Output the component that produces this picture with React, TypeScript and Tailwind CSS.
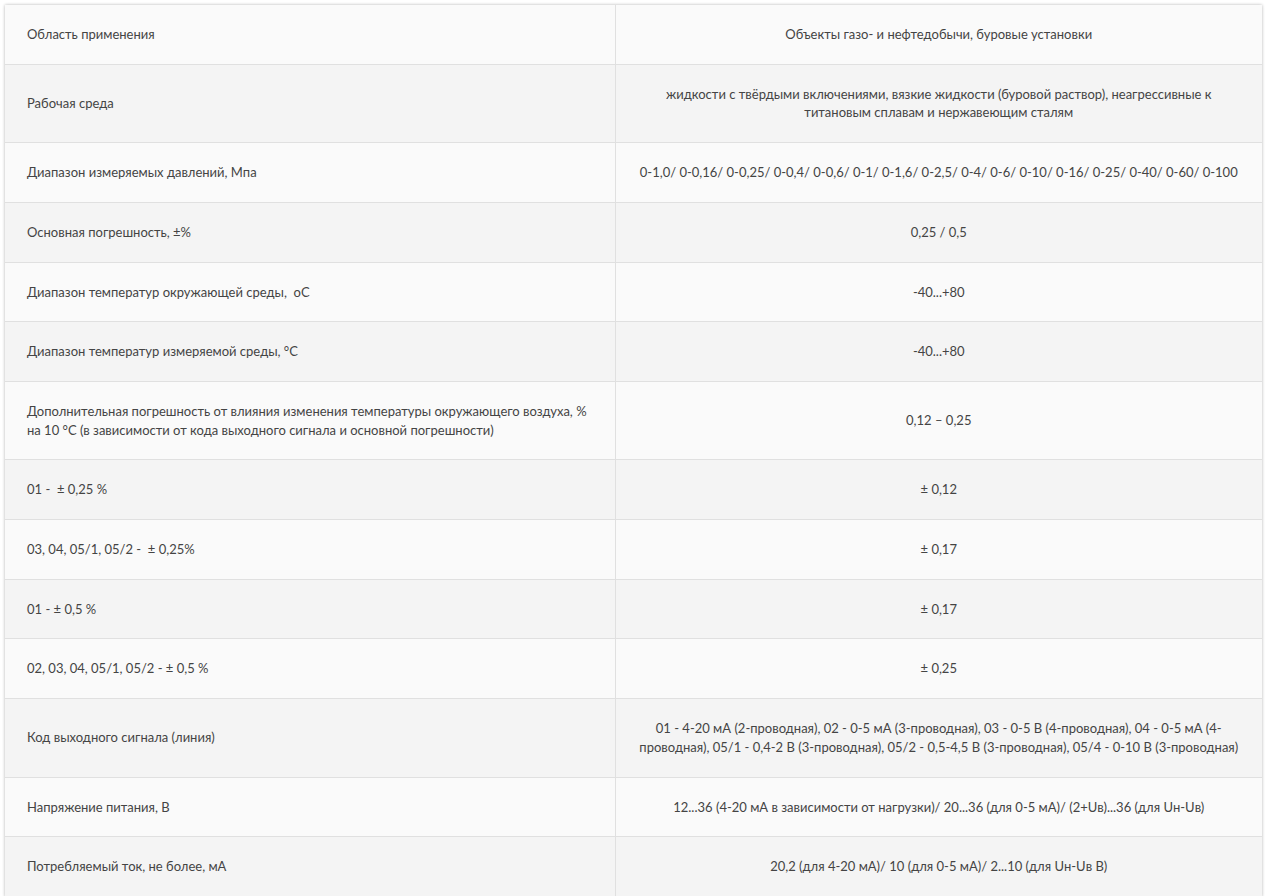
import React from "react";

const rows: [string, string][] = [
  ["Область применения", "Объекты газо- и нефтедобычи, буровые установки"],
  [
    "Рабочая среда",
    "жидкости с твёрдыми включениями, вязкие жидкости (буровой раствор), неагрессивные к титановым сплавам и нержавеющим сталям",
  ],
  [
    "Диапазон измеряемых давлений, Мпа",
    "0-1,0/ 0-0,16/ 0-0,25/ 0-0,4/ 0-0,6/ 0-1/ 0-1,6/ 0-2,5/ 0-4/ 0-6/ 0-10/ 0-16/ 0-25/ 0-40/ 0-60/ 0-100",
  ],
  ["Основная погрешность, ±%", "0,25 / 0,5"],
  ["Диапазон температур окружающей среды, \u00a0оС", "-40...+80"],
  ["Диапазон температур измеряемой среды, °С", "-40...+80"],
  [
    "Дополнительная погрешность от влияния изменения температуры окружающего воздуха, % на 10 °С (в зависимости от кода выходного сигнала и основной погрешности)",
    "0,12 – 0,25",
  ],
  ["01 - \u00a0± 0,25 %", "± 0,12"],
  ["03, 04, 05/1, 05/2 - \u00a0± 0,25%", "± 0,17"],
  ["01 - ± 0,5 %", "± 0,17"],
  ["02, 03, 04, 05/1, 05/2 - ± 0,5 %", "± 0,25"],
  [
    "Код выходного сигнала (линия)",
    "01 - 4-20 мА (2-проводная), 02 - 0-5 мА (3-проводная), 03 - 0-5 В (4-проводная), 04 - 0-5 мА (4-проводная), 05/1 - 0,4-2 В (3-проводная), 05/2 - 0,5-4,5 В (3-проводная), 05/4 - 0-10 В (3-проводная)",
  ],
  [
    "Напряжение питания, В",
    "12...36 (4-20 мА в зависимости от нагрузки)/ 20...36 (для 0-5 мА)/ (2+Uв)...36 (для Uн-Uв)",
  ],
  ["Потребляемый ток, не более, мА", "20,2 (для 4-20 мА)/ 10 (для 0-5 мА)/ 2...10 (для Uн-Uв В)"],
];

export default function App() {
  return (
    <div className="bg-white min-h-screen pt-[5px] pl-[5px]">
      <table className="w-[1257px] border-collapse shadow-[0_0_3px_rgba(0,0,0,0.3)] text-[13px] leading-[18.7px] text-[#444] font-['Lato','Liberation_Sans',Arial,sans-serif]">
        <tbody>
          {rows.map(([a, b], i) => (
            <tr key={i} className={i % 2 === 0 ? "bg-[#fafafa]" : "bg-[#f4f4f4]"}>
              <td className="w-[610px] border-b border-r border-[#e0e0e0] py-5 pl-[22px] pr-5 text-left align-middle">
                {a}
              </td>
              <td className="border-b border-[#e0e0e0] py-5 px-5 text-center align-middle">{b}</td>
            </tr>
          ))}
        </tbody>
      </table>
    </div>
  );
}
